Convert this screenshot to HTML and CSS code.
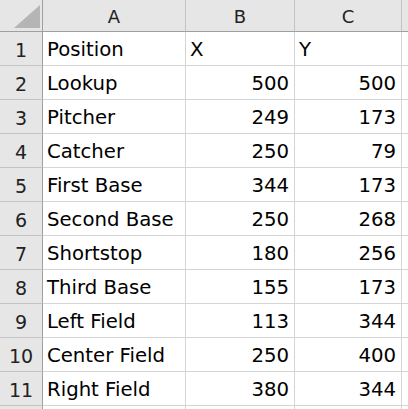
FILE: index.html
```
<!DOCTYPE html>
<html>
<head>
<meta charset="utf-8">
<link rel="stylesheet" href="styles.css">
</head>
<body>
<div class="sheet">
  <div class="corner"><svg class="tri" width="42" height="31" viewBox="0 0 42 31"><polygon points="14,28 40,28 40,5" fill="#b5b5b5"/></svg></div>
  <div class="colh">A</div><div class="colh">B</div><div class="colh">C</div><div class="colh"></div>

  <div class="rowh">1</div><div class="cell">Position</div><div class="cell">X</div><div class="cell">Y</div><div class="cell"></div>
  <div class="rowh">2</div><div class="cell">Lookup</div><div class="cell num">500</div><div class="cell num">500</div><div class="cell"></div>
  <div class="rowh">3</div><div class="cell">Pitcher</div><div class="cell num">249</div><div class="cell num">173</div><div class="cell"></div>
  <div class="rowh">4</div><div class="cell">Catcher</div><div class="cell num">250</div><div class="cell num">79</div><div class="cell"></div>
  <div class="rowh">5</div><div class="cell">First Base</div><div class="cell num">344</div><div class="cell num">173</div><div class="cell"></div>
  <div class="rowh">6</div><div class="cell">Second Base</div><div class="cell num">250</div><div class="cell num">268</div><div class="cell"></div>
  <div class="rowh">7</div><div class="cell">Shortstop</div><div class="cell num">180</div><div class="cell num">256</div><div class="cell"></div>
  <div class="rowh">8</div><div class="cell">Third Base</div><div class="cell num">155</div><div class="cell num">173</div><div class="cell"></div>
  <div class="rowh">9</div><div class="cell">Left Field</div><div class="cell num">113</div><div class="cell num">344</div><div class="cell"></div>
  <div class="rowh">10</div><div class="cell">Center Field</div><div class="cell num">250</div><div class="cell num">400</div><div class="cell"></div>
  <div class="rowh">11</div><div class="cell">Right Field</div><div class="cell num">380</div><div class="cell num">344</div><div class="cell"></div>
  <div class="rowh"></div><div class="cell"></div><div class="cell"></div><div class="cell"></div><div class="cell"></div>
</div>
</body>
</html>
```
FILE: styles.css
```
html, body {
  margin: 0;
  padding: 0;
  background: #ffffff;
  overflow: hidden;
}
.sheet {
  display: grid;
  grid-template-columns: 43px 143px 109px 107px 1fr;
  grid-template-rows: 32px;
  grid-auto-rows: 34px;
  width: 408px;
  height: 409px;
  overflow: hidden;
  font-family: "DejaVu Sans", sans-serif;
  color: #000;
}
.sheet > div {
  box-sizing: border-box;
  display: flex;
  align-items: center;
  white-space: nowrap;
  overflow: hidden;
}
.corner {
  background: #e6e6e6;
  border-right: 1px solid #9f9f9f;
  border-bottom: 1px solid #9f9f9f;
}
.tri {
  display: block;
}
.colh {
  background: #e6e6e6;
  border-right: 1px solid #c3c3c3;
  border-bottom: 1px solid #9f9f9f;
  justify-content: center;
  font-size: 18px;
  color: #222;
  padding-top: 1px;
}
.rowh {
  background: #e6e6e6;
  border-right: 1px solid #9f9f9f;
  border-bottom: 1px solid #c3c3c3;
  justify-content: center;
  font-size: 19px;
  color: #222;
  padding-top: 2px;
}
.cell {
  border-right: 1px solid #d4d4d4;
  border-bottom: 1px solid #d4d4d4;
  font-size: 19.7px;
  padding: 2px 5px 0 4px;
}
.num {
  justify-content: flex-end;
}
```
